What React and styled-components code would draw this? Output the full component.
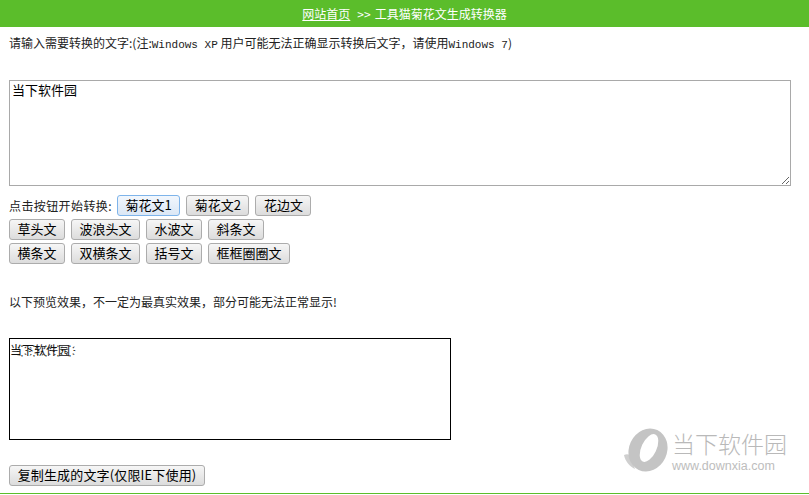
import styled, { createGlobalStyle } from "styled-components";

const GlobalStyle = createGlobalStyle`
  html, body {
    margin: 0;
    padding: 0;
    height: 495px;
    overflow: hidden;
    background: #fff;
    color: #222;
    font-family: "Noto Sans CJK SC", "Liberation Sans", sans-serif;
    font-size: 12px;
  }
`;

const rows = [
  ["草头文", "波浪头文", "水波文", "斜条文"],
  ["横条文", "双横条文", "括号文", "框框圈圈文"],
];

export default function App() {
  return (
    <Page>
      <GlobalStyle />
      <TopBar>
        <HomeLink href="#">网站首页</HomeLink>
        <Crumb>&gt;&gt;</Crumb>
        <span>工具猫菊花文生成转换器</span>
      </TopBar>

      <Content>
        <Intro>
          请输入需要转换的文字:(注:<Mono>Windows XP</Mono> 用户可能无法正确显示转换后文字，请使用<Mono>Windows 7</Mono>)
        </Intro>

        <Source defaultValue="当下软件园" />

        <ButtonRows>
          <ButtonRow>
            <Label>点击按钮开始转换:</Label>
            <FontButton $active>菊花文1</FontButton>
            <FontButton>菊花文2</FontButton>
            <FontButton>花边文</FontButton>
          </ButtonRow>
          {rows.map((row) => (
            <ButtonRow key={row[0]}>
              {row.map((name) => (
                <FontButton key={name}>{name}</FontButton>
              ))}
            </ButtonRow>
          ))}
        </ButtonRows>

        <Note>以下预览效果，不一定为最真实效果，部分可能无法正常显示!</Note>

        <Preview>当҉下҉软҉件҉园҉</Preview>

        <CopyButton>复制生成的文字(仅限IE下使用)</CopyButton>
      </Content>

      <BottomLine />

      <Watermark>
        <svg width="44" height="46" viewBox="0 0 44 46">
          <path d="M0 27C2 26 4 26 6 27L11 41C6 39 1 33 0 27Z" fill="#cfcfcf" />
          <ellipse cx="24" cy="22" rx="19" ry="22" transform="rotate(25 24 22)" fill="#c4c4c4" />
          <ellipse cx="25" cy="20" rx="7.5" ry="15" transform="rotate(25 25 20)" fill="#fff" />
        </svg>
        <WatermarkText>
          <WatermarkName>当下软件园</WatermarkName>
          <WatermarkUrl>www.downxia.com</WatermarkUrl>
        </WatermarkText>
      </Watermark>
    </Page>
  );
}

const Page = styled.div`
  position: relative;
  height: 495px;
  overflow: hidden;
`;

const TopBar = styled.div`
  height: 27px;
  background: #5bbd2b;
  color: #fff;
  display: flex;
  align-items: center;
  justify-content: center;
  font-size: 12px;
  line-height: 27px;
`;

const HomeLink = styled.a`
  color: #fff;
  text-decoration: underline;
`;

const Crumb = styled.span`
  margin: 0 4px 0 7px;
`;

const Content = styled.div`
  padding: 0 9px;
`;

const Intro = styled.div`
  margin-top: 8px;
  height: 16px;
  line-height: 16px;
  white-space: nowrap;
`;

const Mono = styled.span`
  font-family: "Liberation Mono", monospace;
  font-size: 11px;
`;

const Source = styled.textarea`
  display: block;
  box-sizing: border-box;
  width: 782px;
  height: 106px;
  margin-top: 29px;
  padding: 1px 2px;
  border: 1px solid #a9a9a9;
  outline: none;
  color: #000;
  font-family: "Noto Sans CJK SC", sans-serif;
  font-size: 13px;
  line-height: 16px;
`;

const ButtonRows = styled.div`
  display: flex;
  flex-direction: column;
  gap: 3px;
  margin-top: 9px;
`;

const ButtonRow = styled.div`
  display: flex;
  align-items: center;
  gap: 6px;
`;

const Label = styled.span`
  width: 102px;
  white-space: nowrap;
  letter-spacing: 0.4px;
`;

const FontButton = styled.button`
  box-sizing: border-box;
  height: 21px;
  padding: 0 7.5px 2px;
  border: 1px solid ${(p) => (p.$active ? "#7eb4ea" : "#acacac")};
  border-radius: 3px;
  background: ${(p) =>
    p.$active
      ? "linear-gradient(#f2f7fd, #dbe7f5)"
      : "linear-gradient(#f6f6f6, #dcdcdc)"};
  color: #000;
  font-family: "Noto Sans CJK SC", sans-serif;
  font-size: 13px;
  line-height: 18px;
  white-space: nowrap;
`;

const Note = styled.div`
  margin-top: 30px;
  height: 16px;
  line-height: 16px;
`;

const Preview = styled.div`
  box-sizing: border-box;
  width: 442px;
  height: 102px;
  margin-top: 28px;
  border: 1px solid #000;
  padding: 3px 0 0;
  line-height: 16px;
  color: #111;
`;

const CopyButton = styled(FontButton)`
  display: block;
  width: 196px;
  margin-top: 25px;
  padding: 0 0 2px;
  letter-spacing: 0.15px;
`;

const BottomLine = styled.div`
  position: absolute;
  left: 0;
  right: 0;
  top: 493px;
  height: 1px;
  background: #5bbd2b;
`;

const Watermark = styled.div`
  position: absolute;
  left: 624px;
  top: 428px;
  display: flex;
  align-items: flex-start;
  gap: 4px;
`;

const WatermarkText = styled.div`
  display: flex;
  flex-direction: column;
  gap: 2px;
  margin-top: 2px;
`;

const WatermarkName = styled.span`
  color: #b9b9b9;
  font-size: 23px;
  line-height: 26px;
  font-weight: 300;
  height: 26px;
`;

const WatermarkUrl = styled.span`
  color: #bdbdbd;
  font-family: "Liberation Sans", sans-serif;
  font-size: 12.5px;
  line-height: 16px;
`;
